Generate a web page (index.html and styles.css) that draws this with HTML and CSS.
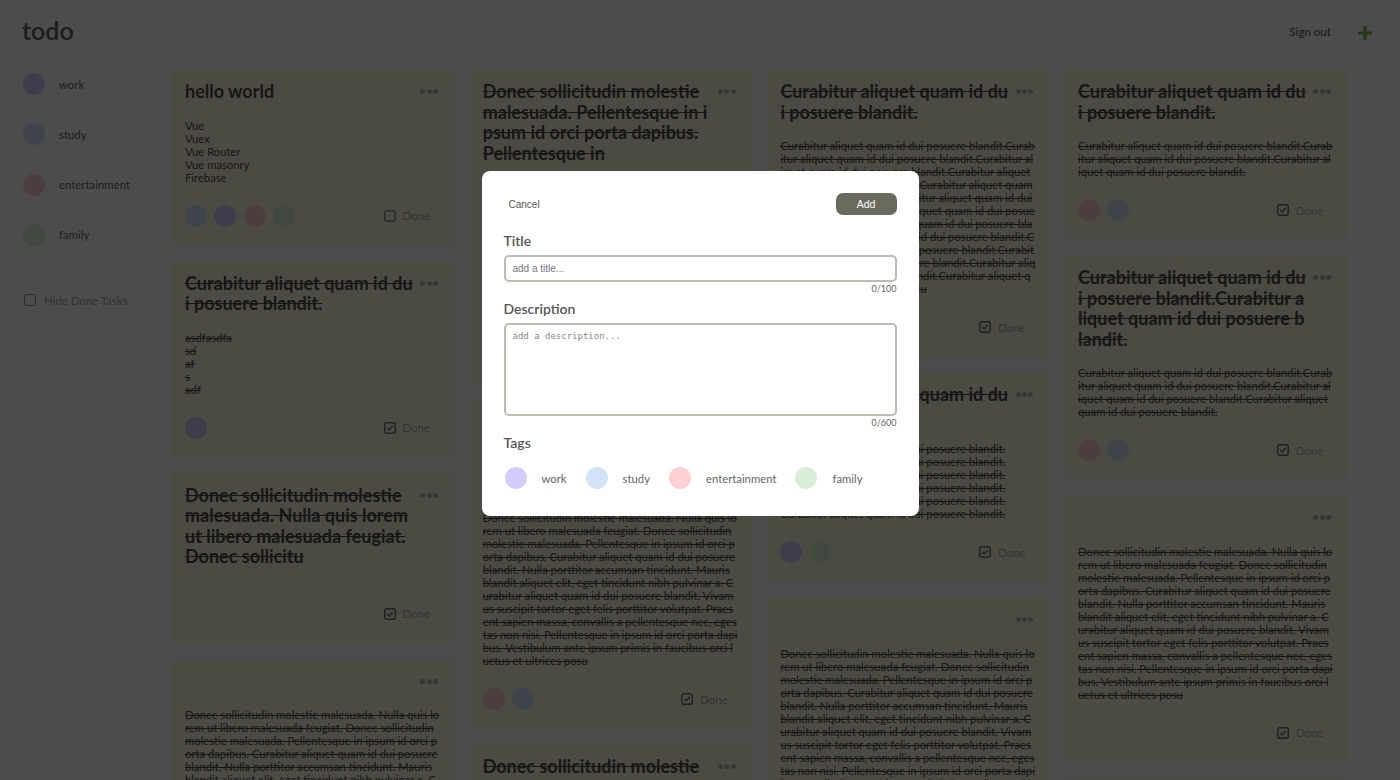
FILE: index.html
```html
<!DOCTYPE html>
<html lang="en">
<head>
<meta charset="utf-8">
<title>todo</title>
<link rel="stylesheet" href="styles.css">
</head>
<body>
<div class="app">
  <header class="topbar">
    <div class="logo">todo</div>
    <div class="actions">
      <button class="signout">Sign out</button>
      <button class="add-btn" aria-label="Add"><svg width="16" height="16" viewBox="0 0 16 16"><path d="M8 1v14M1 8h14" stroke="#76b947" stroke-width="3" fill="none"/></svg></button>
    </div>
  </header>
  <div class="layout">
    <aside class="sidebar">
      <ul class="tag-list">
        <li class="tag-item"><span class="dot work"></span>work</li>
        <li class="tag-item"><span class="dot study"></span>study</li>
        <li class="tag-item"><span class="dot ent"></span>entertainment</li>
        <li class="tag-item"><span class="dot family"></span>family</li>
      </ul>
      <label class="hide-done"><span class="box"></span>Hide Done Tasks</label>
    </aside>
    <main class="board">
      <div class="col">
        <article class="card">
          <div class="card-head"><h2 class="card-title">hello world</h2><span class="more"><i></i><i></i><i></i></span></div>
          <p class="card-desc">Vue
Vuex
Vue Router
Vue masonry
Firebase</p>
          <div class="card-foot">
            <div class="card-tags"><span class="dot study"></span><span class="dot work"></span><span class="dot ent"></span><span class="dot family"></span></div>
            <label class="done-toggle unchecked"><svg width="12" height="12" viewBox="0 0 12 12"><rect x=".75" y=".75" width="10.5" height="10.5" rx="2" fill="none" stroke="currentColor" stroke-width="1.4"/></svg><span>Done</span></label>
          </div>
        </article>
        <article class="card done">
          <div class="card-head"><h2 class="card-title">Curabitur aliquet quam id dui posuere blandit.</h2><span class="more"><i></i><i></i><i></i></span></div>
          <p class="card-desc">asdfasdfa
sd
af
s
adf</p>
          <div class="card-foot">
            <div class="card-tags"><span class="dot work"></span></div>
            <label class="done-toggle"><svg width="12" height="12" viewBox="0 0 12 12"><rect x=".75" y=".75" width="10.5" height="10.5" rx="2" fill="none" stroke="currentColor" stroke-width="1.4"/><path d="M3.2 6.1l1.9 1.9 3.7-4" fill="none" stroke="currentColor" stroke-width="1.4"/></svg><span>Done</span></label>
          </div>
        </article>
        <article class="card done no-desc">
          <div class="card-head"><h2 class="card-title">Donec sollicitudin molestie malesuada. Nulla quis lorem ut libero malesuada feugiat. Donec sollicitu</h2><span class="more"><i></i><i></i><i></i></span></div>
          <div class="card-foot">
            <div class="card-tags"></div>
            <label class="done-toggle"><svg width="12" height="12" viewBox="0 0 12 12"><rect x=".75" y=".75" width="10.5" height="10.5" rx="2" fill="none" stroke="currentColor" stroke-width="1.4"/><path d="M3.2 6.1l1.9 1.9 3.7-4" fill="none" stroke="currentColor" stroke-width="1.4"/></svg><span>Done</span></label>
          </div>
        </article>
        <article class="card done">
          <div class="card-head"><h2 class="card-title"></h2><span class="more"><i></i><i></i><i></i></span></div>
          <p class="card-desc">Donec sollicitudin molestie malesuada. Nulla quis lorem ut libero malesuada feugiat. Donec sollicitudin molestie malesuada. Pellentesque in ipsum id orci porta dapibus. Curabitur aliquet quam id dui posuere blandit. Nulla porttitor accumsan tincidunt. Mauris blandit aliquet elit, eget tincidunt nibh pulvinar a. Curabitur aliquet quam id dui posuere blandit. Vivamus suscipit tortor eget felis porttitor volutpat. Praesent sapien massa, convallis a pellentesque nec, egestas non nisi. Pellentesque in ipsum id orci porta dapibus. Vestibulum ante ipsum primis in faucibus orci luctus et ultrices posu</p>
          <div class="card-foot">
            <div class="card-tags"></div>
            <label class="done-toggle"><svg width="12" height="12" viewBox="0 0 12 12"><rect x=".75" y=".75" width="10.5" height="10.5" rx="2" fill="none" stroke="currentColor" stroke-width="1.4"/><path d="M3.2 6.1l1.9 1.9 3.7-4" fill="none" stroke="currentColor" stroke-width="1.4"/></svg><span>Done</span></label>
          </div>
        </article>
      </div>

      <div class="col">
        <article class="card done">
          <div class="card-head"><h2 class="card-title">Donec sollicitudin molestie malesuada. Pellentesque in ipsum id orci porta dapibus. Pellentesque in</h2><span class="more"><i></i><i></i><i></i></span></div>
          <p class="card-desc">Donec sollicitudin molestie malesuada. Nulla quis lorem ut libero malesuada feugiat. Donec sollicitudin molestie malesuada. Pellentesque in ipsum id orci porta dapibus. Curabitur aliquet quam id dui posuere blandit. Nulla porttitor accumsan tincidunt. Mauris blandit aliquet elit, eget tincidunt nibh pulvinar a. Curabitur aliquet quam id dui posuere blandit. Vivamus suscipit tortor eget felis porttitor volutpat. Praesent sapien massa, convallis a pellentesque nec, egestas non nisi. Pellentesque in ipsum id orci porta dapibus.</p>
          <div class="card-foot">
            <div class="card-tags"></div>
            <label class="done-toggle"><svg width="12" height="12" viewBox="0 0 12 12"><rect x=".75" y=".75" width="10.5" height="10.5" rx="2" fill="none" stroke="currentColor" stroke-width="1.4"/><path d="M3.2 6.1l1.9 1.9 3.7-4" fill="none" stroke="currentColor" stroke-width="1.4"/></svg><span>Done</span></label>
          </div>
        </article>
        <article class="card done">
          <div class="card-head"><h2 class="card-title">Donec sollicitudin molestie malesuada. Nulla quis lorem ut libero malesuada feugiat. Donec sollicitu</h2><span class="more"><i></i><i></i><i></i></span></div>
          <p class="card-desc">Donec sollicitudin molestie malesuada. Nulla quis lorem ut libero malesuada feugiat. Donec sollicitudin molestie malesuada. Pellentesque in ipsum id orci porta dapibus. Curabitur aliquet quam id dui posuere blandit. Nulla porttitor accumsan tincidunt. Mauris blandit aliquet elit, eget tincidunt nibh pulvinar a. Curabitur aliquet quam id dui posuere blandit. Vivamus suscipit tortor eget felis porttitor volutpat. Praesent sapien massa, convallis a pellentesque nec, egestas non nisi. Pellentesque in ipsum id orci porta dapibus. Vestibulum ante ipsum primis in faucibus orci luctus et ultrices posu</p>
          <div class="card-foot">
            <div class="card-tags"><span class="dot ent"></span><span class="dot study"></span></div>
            <label class="done-toggle"><svg width="12" height="12" viewBox="0 0 12 12"><rect x=".75" y=".75" width="10.5" height="10.5" rx="2" fill="none" stroke="currentColor" stroke-width="1.4"/><path d="M3.2 6.1l1.9 1.9 3.7-4" fill="none" stroke="currentColor" stroke-width="1.4"/></svg><span>Done</span></label>
          </div>
        </article>
        <article class="card done">
          <div class="card-head"><h2 class="card-title">Donec sollicitudin molestie malesuada. Nulla quis lorem ut libero malesuada feugiat.</h2><span class="more"><i></i><i></i><i></i></span></div>
          <p class="card-desc">Donec sollicitudin molestie malesuada. Nulla quis lorem ut libero malesuada feugiat.</p>
          <div class="card-foot">
            <div class="card-tags"></div>
            <label class="done-toggle"><svg width="12" height="12" viewBox="0 0 12 12"><rect x=".75" y=".75" width="10.5" height="10.5" rx="2" fill="none" stroke="currentColor" stroke-width="1.4"/><path d="M3.2 6.1l1.9 1.9 3.7-4" fill="none" stroke="currentColor" stroke-width="1.4"/></svg><span>Done</span></label>
          </div>
        </article>
      </div>

      <div class="col">
        <article class="card done">
          <div class="card-head"><h2 class="card-title">Curabitur aliquet quam id dui posuere blandit.</h2><span class="more"><i></i><i></i><i></i></span></div>
          <p class="card-desc">Curabitur aliquet quam id dui posuere blandit.Curabitur aliquet quam id dui posuere blandit.Curabitur aliquet quam id dui posuere blandit.Curabitur aliquet quam id dui posuere blandit.Curabitur aliquet quam id dui posuere blandit.Curabitur aliquet quam id dui posuere blandit.Curabitur aliquet quam id dui posuere blandit.Curabitur aliquet quam id dui posuere blandit.Curabitur aliquet quam id dui posuere blandit.Curabitur aliquet quam id dui posuere blandit.Curabitur aliquet quam id dui posuere blandit.Curabitur aliquet quam id dui posuere blandit.Curabitur aliquet quam id dui posuere blandit.Cu</p>
          <div class="card-foot">
            <div class="card-tags"></div>
            <label class="done-toggle"><svg width="12" height="12" viewBox="0 0 12 12"><rect x=".75" y=".75" width="10.5" height="10.5" rx="2" fill="none" stroke="currentColor" stroke-width="1.4"/><path d="M3.2 6.1l1.9 1.9 3.7-4" fill="none" stroke="currentColor" stroke-width="1.4"/></svg><span>Done</span></label>
          </div>
        </article>
        <article class="card done">
          <div class="card-head"><h2 class="card-title">Curabitur aliquet quam id dui posuere blandit.</h2><span class="more"><i></i><i></i><i></i></span></div>
          <p class="card-desc">Curabitur aliquet quam id dui posuere blandit.
Curabitur aliquet quam id dui posuere blandit.
Curabitur aliquet quam id dui posuere blandit.
Curabitur aliquet quam id dui posuere blandit.
Curabitur aliquet quam id dui posuere blandit.
Curabitur aliquet quam id dui posuere blandit.</p>
          <div class="card-foot">
            <div class="card-tags"><span class="dot work"></span><span class="dot family"></span></div>
            <label class="done-toggle"><svg width="12" height="12" viewBox="0 0 12 12"><rect x=".75" y=".75" width="10.5" height="10.5" rx="2" fill="none" stroke="currentColor" stroke-width="1.4"/><path d="M3.2 6.1l1.9 1.9 3.7-4" fill="none" stroke="currentColor" stroke-width="1.4"/></svg><span>Done</span></label>
          </div>
        </article>
        <article class="card done">
          <div class="card-head"><h2 class="card-title"></h2><span class="more"><i></i><i></i><i></i></span></div>
          <p class="card-desc">Donec sollicitudin molestie malesuada. Nulla quis lorem ut libero malesuada feugiat. Donec sollicitudin molestie malesuada. Pellentesque in ipsum id orci porta dapibus. Curabitur aliquet quam id dui posuere blandit. Nulla porttitor accumsan tincidunt. Mauris blandit aliquet elit, eget tincidunt nibh pulvinar a. Curabitur aliquet quam id dui posuere blandit. Vivamus suscipit tortor eget felis porttitor volutpat. Praesent sapien massa, convallis a pellentesque nec, egestas non nisi. Pellentesque in ipsum id orci porta dapibus. Vestibulum ante ipsum primis in faucibus orci luctus et ultrices posu</p>
          <div class="card-foot">
            <div class="card-tags"></div>
            <label class="done-toggle"><svg width="12" height="12" viewBox="0 0 12 12"><rect x=".75" y=".75" width="10.5" height="10.5" rx="2" fill="none" stroke="currentColor" stroke-width="1.4"/><path d="M3.2 6.1l1.9 1.9 3.7-4" fill="none" stroke="currentColor" stroke-width="1.4"/></svg><span>Done</span></label>
          </div>
        </article>
      </div>

      <div class="col">
        <article class="card done">
          <div class="card-head"><h2 class="card-title">Curabitur aliquet quam id dui posuere blandit.</h2><span class="more"><i></i><i></i><i></i></span></div>
          <p class="card-desc">Curabitur aliquet quam id dui posuere blandit.Curabitur aliquet quam id dui posuere blandit.Curabitur aliquet quam id dui posuere blandit.</p>
          <div class="card-foot">
            <div class="card-tags"><span class="dot ent"></span><span class="dot study"></span></div>
            <label class="done-toggle"><svg width="12" height="12" viewBox="0 0 12 12"><rect x=".75" y=".75" width="10.5" height="10.5" rx="2" fill="none" stroke="currentColor" stroke-width="1.4"/><path d="M3.2 6.1l1.9 1.9 3.7-4" fill="none" stroke="currentColor" stroke-width="1.4"/></svg><span>Done</span></label>
          </div>
        </article>
        <article class="card done">
          <div class="card-head"><h2 class="card-title">Curabitur aliquet quam id dui posuere blandit.Curabitur aliquet quam id dui posuere blandit.</h2><span class="more"><i></i><i></i><i></i></span></div>
          <p class="card-desc">Curabitur aliquet quam id dui posuere blandit.Curabitur aliquet quam id dui posuere blandit.Curabitur aliquet quam id dui posuere blandit.Curabitur aliquet quam id dui posuere blandit.</p>
          <div class="card-foot">
            <div class="card-tags"><span class="dot ent"></span><span class="dot study"></span></div>
            <label class="done-toggle"><svg width="12" height="12" viewBox="0 0 12 12"><rect x=".75" y=".75" width="10.5" height="10.5" rx="2" fill="none" stroke="currentColor" stroke-width="1.4"/><path d="M3.2 6.1l1.9 1.9 3.7-4" fill="none" stroke="currentColor" stroke-width="1.4"/></svg><span>Done</span></label>
          </div>
        </article>
        <article class="card done">
          <div class="card-head"><h2 class="card-title"></h2><span class="more"><i></i><i></i><i></i></span></div>
          <p class="card-desc">Donec sollicitudin molestie malesuada. Nulla quis lorem ut libero malesuada feugiat. Donec sollicitudin molestie malesuada. Pellentesque in ipsum id orci porta dapibus. Curabitur aliquet quam id dui posuere blandit. Nulla porttitor accumsan tincidunt. Mauris blandit aliquet elit, eget tincidunt nibh pulvinar a. Curabitur aliquet quam id dui posuere blandit. Vivamus suscipit tortor eget felis porttitor volutpat. Praesent sapien massa, convallis a pellentesque nec, egestas non nisi. Pellentesque in ipsum id orci porta dapibus. Vestibulum ante ipsum primis in faucibus orci luctus et ultrices posu</p>
          <div class="card-foot">
            <div class="card-tags"></div>
            <label class="done-toggle"><svg width="12" height="12" viewBox="0 0 12 12"><rect x=".75" y=".75" width="10.5" height="10.5" rx="2" fill="none" stroke="currentColor" stroke-width="1.4"/><path d="M3.2 6.1l1.9 1.9 3.7-4" fill="none" stroke="currentColor" stroke-width="1.4"/></svg><span>Done</span></label>
          </div>
        </article>
        <article class="card done">
          <div class="card-head"><h2 class="card-title">Curabitur aliquet quam id dui posuere blandit.</h2><span class="more"><i></i><i></i><i></i></span></div>
          <p class="card-desc">Curabitur aliquet quam id dui posuere blandit.</p>
        </article>
      </div>
    </main>
  </div>
</div>

<div class="overlay">
  <div class="modal">
    <div class="modal-head">
      <button class="btn-cancel">Cancel</button>
      <button class="btn-add">Add</button>
    </div>
    <div class="field-label">Title</div>
    <input class="field-input" type="text" placeholder="add a title...">
    <div class="counter">0/100</div>
    <div class="field-label small-gap">Description</div>
    <textarea class="field-area" placeholder="add a description..."></textarea>
    <div class="counter">0/600</div>
    <div class="field-label small-gap">Tags</div>
    <div class="tag-row">
      <span class="tag-opt"><span class="dot work"></span>work</span>
      <span class="tag-opt"><span class="dot study"></span>study</span>
      <span class="tag-opt"><span class="dot ent"></span>entertainment</span>
      <span class="tag-opt"><span class="dot family"></span>family</span>
    </div>
  </div>
</div>
</body>
</html>
```
FILE: styles.css
```css
* { box-sizing: border-box; }
html, body { margin: 0; height: 100%; overflow: hidden; }
body {
  font-family: Lato, "Open Sans", sans-serif;
  background: #ffffff;
  color: #555;
}
button { font-family: inherit; cursor: pointer; }

.topbar {
  height: 62px;
  display: flex;
  align-items: center;
  justify-content: space-between;
  padding: 0 27px 0 22px;
}
.logo { font-size: 25px; font-weight: 600; color: #5e5e5e; padding-bottom: 2px; }
.actions { display: flex; align-items: center; gap: 26px; }
.signout {
  background: none; border: 0; padding: 0;
  font-size: 11.5px; font-weight: 600; color: #6a6a6a;
  margin-top: 1px;
}
.add-btn { background: none; border: 0; padding: 0; display: flex; margin-top: 3px; }

.layout { display: flex; }
.sidebar { width: 172px; flex: none; padding: 11px 0 0 23px; }
.tag-list { list-style: none; margin: 0; padding: 0; display: flex; flex-direction: column; gap: 28.3px; }
.tag-item { display: flex; align-items: center; gap: 14px; height: 22px; font-size: 11.4px; color: #666; }
.dot { width: 22px; height: 22px; border-radius: 50%; flex: none; display: block; }
.dot.work { background: #d4ccfc; }
.dot.study { background: #d0e3f7; }
.dot.ent { background: #ffd0d3; }
.dot.family { background: #d9f0d8; }

.hide-done {
  display: flex; align-items: center; gap: 8px;
  margin: 48px 0 0 1px;
  font-size: 11.4px; color: #a8a8a8;
}
.hide-done .box { width: 12px; height: 12px; border: 1.4px solid #8a8a8a; border-radius: 2px; }

.board {
  flex: 1;
  display: grid;
  grid-template-columns: repeat(4, 282px);
  column-gap: 15.7px;
  align-items: start;
  padding-top: 7px;
}
.col { display: flex; flex-direction: column; gap: 16px; }

.card {
  background: #fefadf;
  border-radius: 3px;
  padding: 12px 14px 18px 13px;
  color: #4c4c4c;
}
.card-head { display: flex; align-items: flex-start; gap: 5px; }
.card-title {
  flex: 1; min-width: 0; margin: 0;
  min-height: 20.5px;
  font-size: 18px; line-height: 20.5px; font-weight: 700;
  word-break: break-all;
}
.more { display: flex; gap: 1.3px; margin: 8px 2px 0 0; flex: none; }
.more i { display: block; width: 5px; height: 5px; border-radius: 50%; background: #b5b5b5; }
.card-desc {
  margin: 17px 0 0;
  font-size: 11.25px; line-height: 13px;
  white-space: pre-line;
  word-break: break-all;
}
.card-foot {
  display: flex; align-items: center; justify-content: space-between;
  height: 22px; margin-top: 21px;
}
.no-desc .card-foot { margin-top: 36px; }
.card-tags { display: flex; gap: 7.3px; }
.done-toggle {
  display: flex; align-items: center; gap: 7px;
  margin-right: 10px;
  font-size: 11.4px; color: #ababab;
}
.done-toggle svg { color: #6a6a6a; display: block; }
.done-toggle.unchecked svg { color: #8a8a8a; }
.done .card-title, .done .card-desc { text-decoration: line-through; }

.overlay {
  position: fixed; inset: 0;
  background: rgba(0, 0, 0, 0.7);
  display: flex; justify-content: center; align-items: flex-start;
  padding-top: 171px;
}
.modal {
  width: 437px;
  background: #fff;
  border-radius: 8px;
  padding: 22px 22px 27px;
}
.modal-head { display: flex; justify-content: space-between; align-items: center; height: 22px; }
.btn-cancel {
  background: none; border: 0; padding: 0 5px;
  font-family: "Liberation Sans", Arial, sans-serif; font-size: 10px; color: #555;
}
.btn-add {
  width: 61px; height: 22px; border: 0; border-radius: 7px;
  background: #6b6a5f; color: #fff;
  font-family: "Liberation Sans", Arial, sans-serif; font-size: 10.5px;
}
.field-label {
  margin-top: 17px;
  font-size: 14px; line-height: 17px; font-weight: 600; color: #555;
}
.field-label.small-gap { margin-top: 6px; }
.field-input, .field-area {
  display: block; width: 100%;
  margin-top: 5.5px;
  border: 2px solid #bebcb2; border-radius: 5px;
  background: #fff; outline: none;
}
.field-input {
  height: 27px; padding: 0 7px;
  font-family: "Liberation Sans", Arial, sans-serif; font-size: 10px; color: #333;
}
.field-input::placeholder { color: #777; }
.field-area {
  height: 93px; padding: 6px 7px; resize: none;
  font-family: "DejaVu Sans Mono", "Liberation Mono", monospace; font-size: 9px;
}
.field-area::placeholder { color: #8a8a8a; }
.counter { text-align: right; font-size: 9px; line-height: 11px; color: #666; margin-top: 1.5px; }
.tag-row { display: flex; align-items: center; gap: 19px; margin-top: 16px; padding-left: 1px; }
.tag-opt { display: flex; align-items: center; gap: 15px; font-size: 11.3px; color: #666; }
```
